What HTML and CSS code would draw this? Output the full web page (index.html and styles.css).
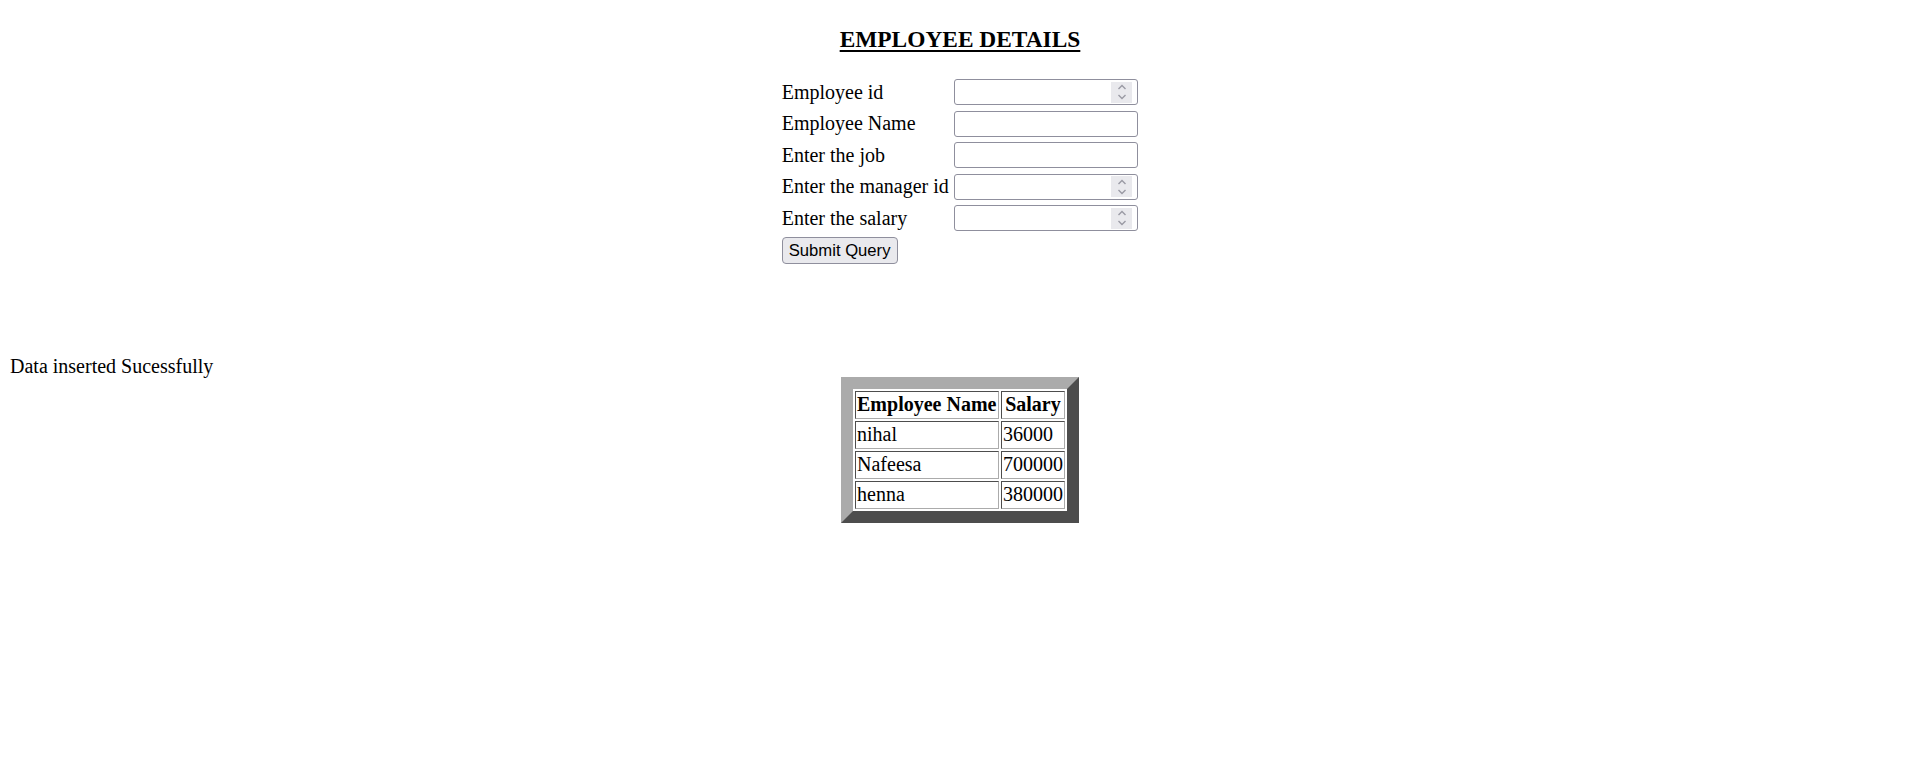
FILE: index.html
```html
<!DOCTYPE html>
<html>
<head>
<meta charset="utf-8">
<title>Employee Details</title>
<link rel="stylesheet" href="styles.css">
</head>
<body class="page">
  <h3 class="title"><span class="title-text">EMPLOYEE DETAILS</span></h3>
  <form class="emp-form">
    <table class="form-table">
      <tr>
        <td class="label">Employee id</td>
        <td><span class="field num"><input class="field-input" type="text" name="empid"><span class="spin"><svg width="12" height="20" viewBox="0 0 12 20"><path d="M2.5 7 L6 3.5 L9.5 7" fill="none" stroke="#9a9aa4" stroke-width="1.4"/><path d="M2.5 13 L6 16.5 L9.5 13" fill="none" stroke="#9a9aa4" stroke-width="1.4"/></svg></span></span></td>
      </tr>
      <tr>
        <td class="label">Employee Name</td>
        <td><span class="field"><input class="field-input" type="text" name="ename"></span></td>
      </tr>
      <tr>
        <td class="label">Enter the job</td>
        <td><span class="field"><input class="field-input" type="text" name="job"></span></td>
      </tr>
      <tr>
        <td class="label">Enter the manager id</td>
        <td><span class="field num"><input class="field-input" type="text" name="mgr"><span class="spin"><svg width="12" height="20" viewBox="0 0 12 20"><path d="M2.5 7 L6 3.5 L9.5 7" fill="none" stroke="#9a9aa4" stroke-width="1.4"/><path d="M2.5 13 L6 16.5 L9.5 13" fill="none" stroke="#9a9aa4" stroke-width="1.4"/></svg></span></span></td>
      </tr>
      <tr>
        <td class="label">Enter the salary</td>
        <td><span class="field num"><input class="field-input" type="text" name="sal"><span class="spin"><svg width="12" height="20" viewBox="0 0 12 20"><path d="M2.5 7 L6 3.5 L9.5 7" fill="none" stroke="#9a9aa4" stroke-width="1.4"/><path d="M2.5 13 L6 16.5 L9.5 13" fill="none" stroke="#9a9aa4" stroke-width="1.4"/></svg></span></span></td>
      </tr>
      <tr>
        <td class="label"><button class="submit" type="button">Submit Query</button></td>
        <td></td>
      </tr>
    </table>
  </form>
  <p class="message">Data inserted Sucessfully</p>
  <table class="result">
    <tr><th class="cell">Employee Name</th><th class="cell">Salary</th></tr>
    <tr><td class="cell">nihal</td><td class="cell">36000</td></tr>
    <tr><td class="cell">Nafeesa</td><td class="cell">700000</td></tr>
    <tr><td class="cell">henna</td><td class="cell">380000</td></tr>
  </table>
</body>
</html>
```

FILE: styles.css
```css
html, body {
  background: #ffffff;
}
.page {
  margin: 10px;
  font-family: "Liberation Serif", "Times New Roman", serif;
  font-size: 20px;
  color: #000000;
}
.title {
  margin: 16px 0 22px 0;
  text-align: center;
  font-size: 23.4px;
  font-weight: bold;
  line-height: normal;
}
.title-text {
  text-decoration: underline;
  text-decoration-thickness: 2px;
  text-underline-offset: 3px;
}
.emp-form {
  margin: 0;
}
.form-table {
  margin: 0 auto;
  border-collapse: separate;
  border-spacing: 3px;
}
.form-table td {
  padding: 1.25px;
  vertical-align: middle;
}
.label {
  white-space: nowrap;
}
.field {
  display: flex;
  align-items: center;
  box-sizing: border-box;
  width: 184px;
  height: 26px;
  border: 1px solid #8f8f9d;
  border-radius: 3px;
  background: #ffffff;
  padding: 0 5px 0 2px;
}
.field-input {
  flex: 1;
  min-width: 0;
  height: 100%;
  border: none;
  outline: none;
  padding: 0;
  margin: 0;
  background: transparent;
  font-family: "Liberation Sans", Arial, sans-serif;
  font-size: 16.67px;
}
.spin {
  display: flex;
  align-items: center;
  justify-content: center;
  width: 21px;
  height: 21px;
  background: #e9e9ed;
}
.submit {
  box-sizing: border-box;
  height: 27px;
  padding: 0 6px;
  margin: 0;
  border: 1px solid #8f8f9d;
  border-radius: 4px;
  background: #e9e9ed;
  color: #000000;
  font-family: "Liberation Sans", Arial, sans-serif;
  font-size: 16.67px;
  line-height: 25px;
}
.message {
  margin: 87px 0 0 0;
  line-height: 22px;
}
.result {
  margin: 0 auto;
  border-collapse: separate;
  border-spacing: 2.5px;
  border-style: solid;
  border-width: 12px;
  border-color: #ababab #4d4d4d #4d4d4d #ababab;
}
.cell {
  padding: 1.25px;
  border-style: solid;
  border-width: 1px;
  border-color: #4d4d4d #ababab #ababab #4d4d4d;
  text-align: left;
  font-size: 20px;
  line-height: 23.5px;
}
th.cell {
  text-align: center;
  font-weight: bold;
}
```
